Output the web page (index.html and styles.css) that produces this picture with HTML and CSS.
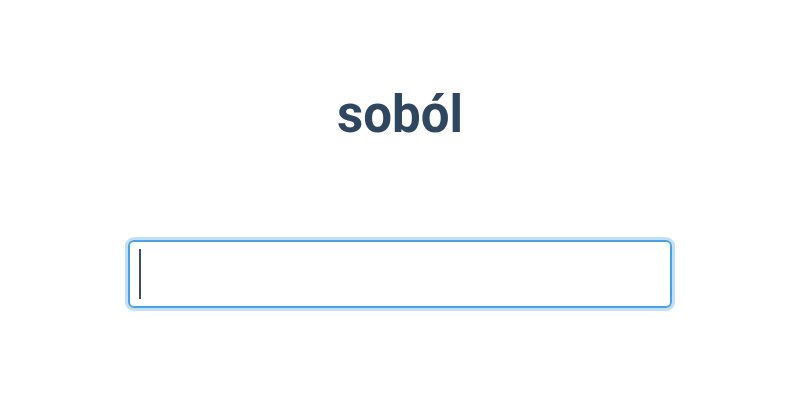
FILE: index.html
```html
<!DOCTYPE html>
<html lang="pl">
<head>
<meta charset="utf-8">
<title>soból</title>
<link rel="stylesheet" href="styles.css">
</head>
<body>
<main class="page">
  <h1 class="word">soból</h1>
  <div class="field" role="textbox" aria-label="Odpowiedź"><span class="caret"></span></div>
</main>
</body>
</html>
```
FILE: styles.css
```css
html, body {
  margin: 0;
  padding: 0;
  background: #ffffff;
}
.page {
  width: 800px;
  height: 400px;
  box-sizing: border-box;
  padding: 85px 128px 0;
  display: flex;
  flex-direction: column;
  align-items: stretch;
  font-family: Roboto, "Liberation Sans", sans-serif;
}
.word {
  margin: 0;
  text-align: center;
  font-size: 51px;
  line-height: 60px;
  font-weight: 700;
  color: #2f4660;
}
.field {
  margin-top: 95px;
  height: 68px;
  box-sizing: border-box;
  border: 2px solid #4aa0e2;
  border-radius: 6px;
  box-shadow: 0 0 0 3px #c3dff6;
  display: flex;
  align-items: center;
  padding-left: 9px;
}
.caret {
  width: 2px;
  height: 50px;
  background: #3d4e62;
}
```
